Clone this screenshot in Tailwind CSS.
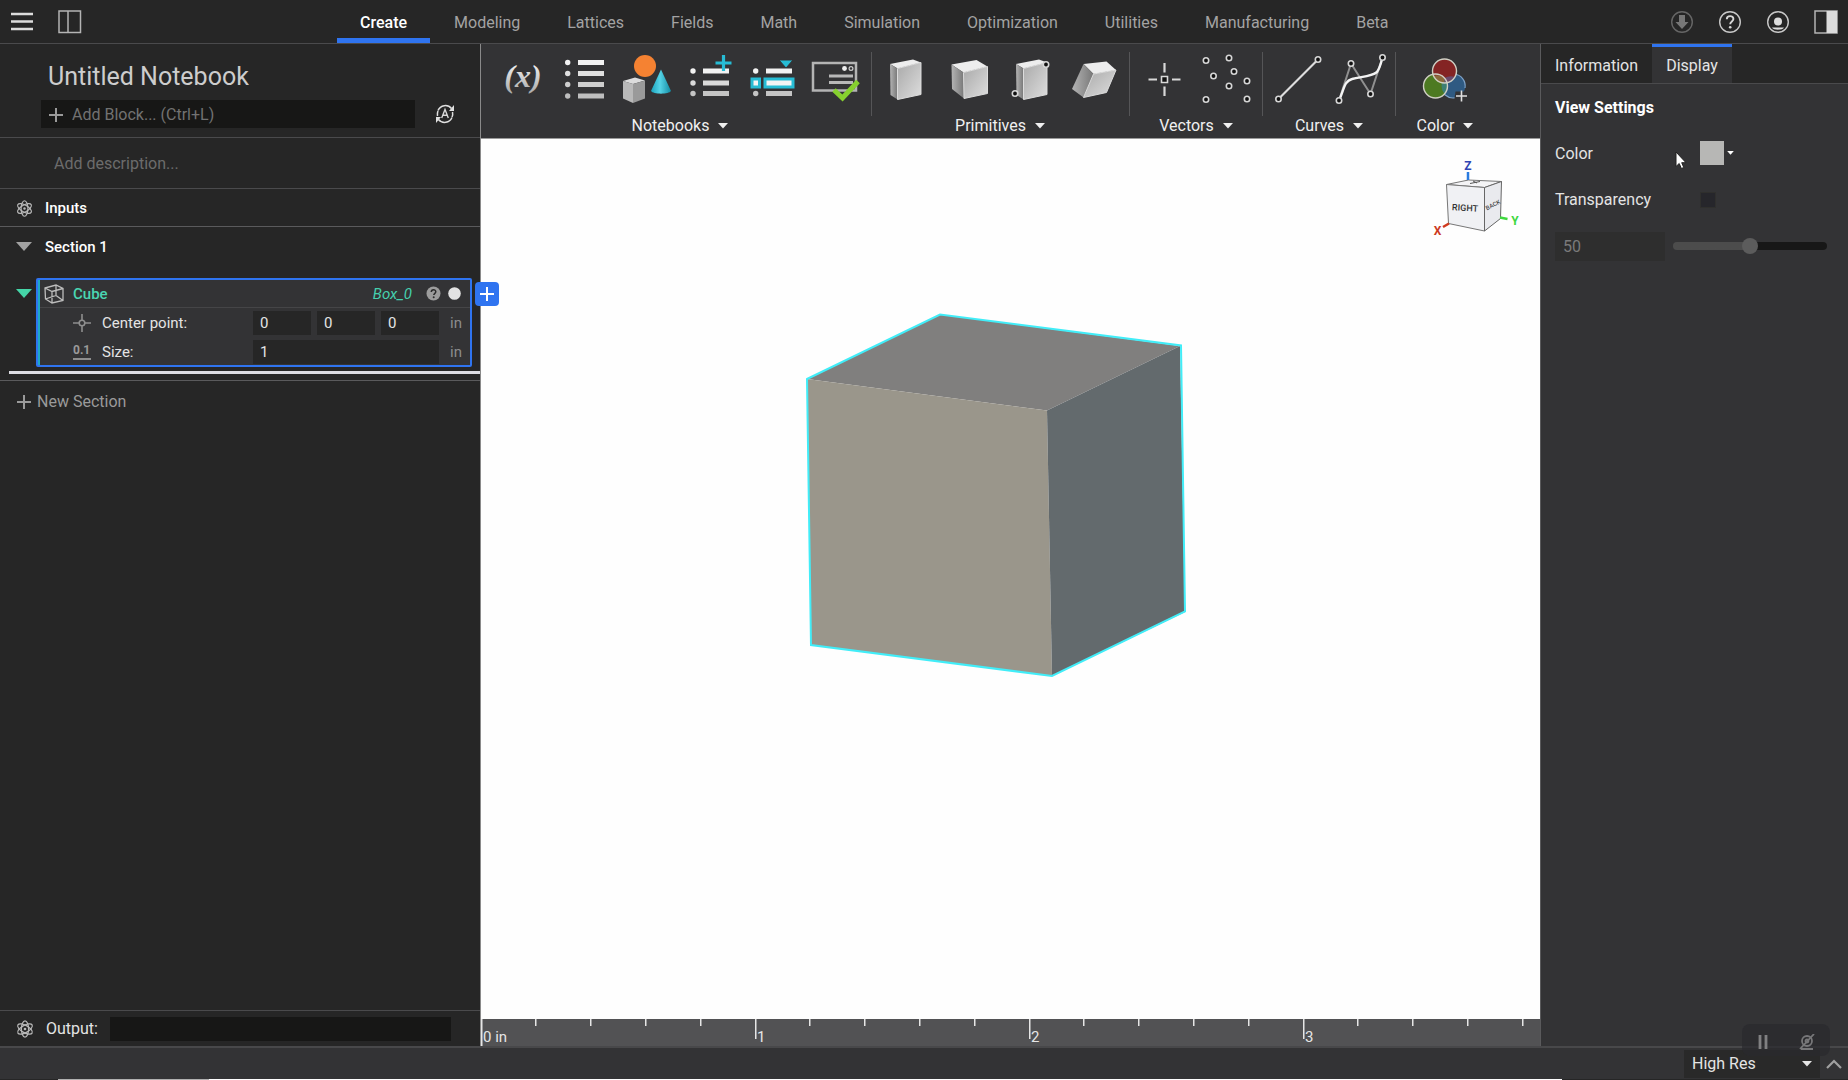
<!DOCTYPE html>
<html lang="en">
<head>
  <meta charset="UTF-8" />
  <meta name="viewport" content="width=device-width, initial-scale=1.0"/>
  <title>Untitled Notebook</title>
  <script src="https://cdn.jsdelivr.net/npm/@tailwindcss/browser@4"></script>
</head>
<body class="h-screen flex flex-col overflow-hidden bg-[#333335] text-[#e4e4e4] text-[16px] leading-5 font-['Roboto',sans-serif]">

  <!-- Shared icons -->
  <svg class="absolute w-0 h-0">
    <defs>
      <linearGradient id="metal" x1="0" y1="0" x2="0" y2="1"><stop offset="0" stop-color="#fff"/><stop offset="1" stop-color="#a8a8a8"/></linearGradient>
      <linearGradient id="face" x1="0" y1="0" x2="1" y2="1"><stop offset="0" stop-color="#a9a9a9"/><stop offset="1" stop-color="#dedede"/></linearGradient>
      <linearGradient id="side" x1="0" y1="0" x2="1" y2="0"><stop offset="0" stop-color="#b4b4b4"/><stop offset="1" stop-color="#777"/></linearGradient>
      <linearGradient id="cone" x1="0" y1="0" x2="1" y2="0"><stop offset="0" stop-color="#1aa3bd"/><stop offset=".45" stop-color="#55d3e6"/><stop offset="1" stop-color="#128ba3"/></linearGradient>
    </defs>
    <symbol id="atom" viewBox="0 0 18 18">
      <g fill="none" stroke="#b9b9b9" stroke-width="1.2">
        <ellipse cx="9" cy="9" rx="3.6" ry="8.2"/>
        <ellipse cx="9" cy="9" rx="3.6" ry="8.2" transform="rotate(60 9 9)"/>
        <ellipse cx="9" cy="9" rx="3.6" ry="8.2" transform="rotate(120 9 9)"/>
      </g>
      <circle cx="9" cy="9" r="1.3" fill="#b9b9b9"/>
    </symbol>
    <symbol id="caret" viewBox="0 0 10 6"><path d="M0 0h10L5 5.500z" fill="currentColor"/></symbol>
    <symbol id="plus" viewBox="0 0 16 16"><path d="M8 1v14M1 8h14" stroke="currentColor" stroke-width="2" fill="none"/></symbol>
    <symbol id="dot" viewBox="0 0 8 8"><circle cx="4" cy="4" r="2.700" fill="#111" stroke="#d6d6d6" stroke-width="1.600"/></symbol>
  </svg>

  <!-- Top bar -->
  <header class="h-11 shrink-0 flex items-stretch bg-[#262626] border-b border-[#4a4a4c]">
    <div class="w-[337px] flex items-center gap-6 pl-2.5">
      <button aria-label="Menu"><svg class="block w-6 h-6" viewBox="0 0 24 24"><path d="M1 4h22M1 11.500h22M1 19h22" stroke="#dcdcdc" stroke-width="2.500"/></svg></button>
      <button aria-label="Toggle left panel"><svg class="block w-6 h-6" viewBox="0 0 24 24"><path d="M1 1h21.500v21.500H1zM10 1v21.500" stroke="#b4b4b4" stroke-width="1.500" fill="none"/></svg></button>
    </div>
    <nav class="flex gap-px text-[#a3a3a3]">
      <a href="#create" class="px-[23px] pt-[13px] border-b-5 border-[#2f74f0] text-white font-medium">Create</a>
      <a href="#modeling" class="px-[23px] pt-[13px]">Modeling</a>
      <a href="#lattices" class="px-[23px] pt-[13px]">Lattices</a>
      <a href="#fields" class="px-[23px] pt-[13px]">Fields</a>
      <a href="#math" class="px-[23px] pt-[13px]">Math</a>
      <a href="#simulation" class="px-[23px] pt-[13px]">Simulation</a>
      <a href="#optimization" class="px-[23px] pt-[13px]">Optimization</a>
      <a href="#utilities" class="px-[23px] pt-[13px]">Utilities</a>
      <a href="#manufacturing" class="px-[23px] pt-[13px]">Manufacturing</a>
      <a href="#beta" class="px-[23px] pt-[13px]">Beta</a>
    </nav>
    <div class="ml-auto pr-2.5 flex items-center gap-6">
      <button aria-label="Download"><svg class="block w-6 h-6" viewBox="0 0 24 24"><circle cx="12" cy="12" r="10.300" fill="none" stroke="#666" stroke-width="1.400"/><path d="M9 5h6v7h3.500L12 19l-6.500-7H9z" fill="#777"/></svg></button>
      <button aria-label="Help"><svg class="block w-6 h-6" viewBox="0 0 24 24"><circle cx="12" cy="12" r="10.300" fill="none" stroke="#c8c8c8" stroke-width="1.400"/><path d="M8.800 9.300c0-4.200 6.600-4.200 6.600-.2 0 2.400-3.200 2.600-3.200 5.200" fill="none" stroke="#d8d8d8" stroke-width="1.900"/><circle cx="12.200" cy="17.200" r="1.300" fill="#d8d8d8"/></svg></button>
      <button aria-label="Account"><svg class="block w-6 h-6" viewBox="0 0 24 24"><circle cx="12" cy="12" r="10.300" fill="none" stroke="#c8c8c8" stroke-width="1.400"/><circle cx="12" cy="11.500" r="4" fill="#dedede"/><path d="M6 17.500h12c-1.500 3-10.500 3-12 0z" fill="#dedede"/></svg></button>
      <button aria-label="Toggle right panel"><svg class="block w-6 h-6" viewBox="0 0 24 24"><path d="M1 1h22v22H1z" stroke="#b4b4b4" stroke-width="1.500" fill="none"/><path d="M12.500 1H23v22H12.500z" fill="#dcdcdc"/></svg></button>
    </div>
  </header>

  <div class="flex-1 min-h-0 flex">

    <!-- Notebook panel -->
    <aside class="w-[481px] shrink-0 flex flex-col bg-[#262626] border-r border-[#8a8a8a]">
      <div class="h-[94px] shrink-0 border-b border-[#4a4a4c] pt-4">
        <input aria-label="Notebook name" value="Untitled Notebook" class="block w-[400px] h-8 ml-12 text-[25px] text-[#cdcdcd] outline-none"/>
        <div class="flex items-center mt-2 pl-[41px]">
          <label class="w-[374px] h-7 flex items-center gap-2 pl-[7px] pt-0.5 bg-[#171716] text-[#9a9a9a]">
            <svg class="w-4 h-4"><use href="#plus"/></svg>
            <input aria-label="Add block" placeholder="Add Block... (Ctrl+L)" class="flex-1 outline-none placeholder:text-[#727272]"/>
          </label>
          <button aria-label="Auto update" class="ml-5">
            <svg class="block w-5 h-5" viewBox="0 0 20 20"><path d="M3 6.500A8 8 0 0 1 16.500 4.500M17.500 8A8 8 0 0 1 17 13M17 13.500A8 8 0 0 1 3.500 15.500M2.500 12A8 8 0 0 1 3 7" stroke="#e0e0e0" stroke-width="1.500" fill="none"/><path d="M19 1v6h-5zM1 19v-6h5z" fill="#e0e0e0"/><path d="M6.700 14L10 5.500l3.300 8.500M8 11.300h4" stroke="#d8d8d8" stroke-width="1.400" fill="none"/></svg>
          </button>
        </div>
      </div>
      <div class="h-[51px] shrink-0 flex items-center pl-[54px] pt-0.5 border-b border-[#4a4a4c]">
        <input aria-label="Description" placeholder="Add description..." class="w-[380px] outline-none placeholder:text-[#6c6c6c]"/>
      </div>
      <div class="h-[38px] shrink-0 flex items-center gap-3 pl-4 pt-px border-b border-[#5a5a5c]">
        <svg class="w-[17px] h-[17px]"><use href="#atom"/></svg>
        <h2 class="text-[15px] font-medium text-white">Inputs</h2>
      </div>
      <div class="h-[51px] shrink-0 flex items-start gap-[13px] pl-4 pt-[10px]">
        <svg class="w-4 h-[9px] mt-[5px] text-[#a2a2a2]" viewBox="0 0 16 9"><path d="M0 0h16L8 9z" fill="currentColor"/></svg>
        <h2 class="text-[15px] font-medium text-white">Section 1</h2>
      </div>

      <!-- Cube block -->
      <div class="flex shrink-0 items-start pl-4 text-[15px]">
        <svg class="w-4 h-[9px] mt-[11px] mr-1 text-[#45d6a8]" viewBox="0 0 16 9"><path d="M0 0h16L8 9z" fill="currentColor"/></svg>
        <div class="relative w-[436px] h-[89px] border-2 border-[#2f74f0] rounded-xs bg-[#333335]">
          <div class="h-7 flex items-center pl-1.5 pr-[9px] border-b border-[#454547]">
            <svg class="w-5 h-5" viewBox="0 0 20 20" fill="none" stroke="#bdbdbd" stroke-width="1.300"><path d="M1 4L12 1l7 3.500v12L8 19l-6.500-4zM1 4l7 3.500 11-3M8 7.500V19M12 1v10.500M1.500 15L12 11.500l7 5"/></svg>
            <span class="ml-[9px] font-medium text-[#4ad6b2]">Cube</span>
            <span class="ml-auto italic text-[#45cfae]">Box_0</span>
            <svg class="w-[15px] h-[15px] ml-3.5" viewBox="0 0 15 15"><circle cx="7.500" cy="7.500" r="7" fill="#9c9c9c"/><path d="M5.300 6c0-3 4.500-3 4.500-.200 0 1.500-2 1.600-2 3.300" fill="none" stroke="#2c2c2c" stroke-width="1.500"/><circle cx="7.700" cy="11.300" r="1" fill="#2c2c2c"/></svg>
            <svg class="w-[13px] h-[13px] ml-[7px]" viewBox="0 0 13 13"><circle cx="6.500" cy="6.500" r="6.300" fill="#e2e2e2"/></svg>
          </div>
          <div class="h-7 flex items-center pl-[35px] pt-0.5">
            <svg class="w-[18px] h-[18px]" viewBox="0 0 18 18" fill="none" stroke="#8e8e8e" stroke-width="1.600"><path d="M9 0v6M9 12v6M0 9h6M12 9h6"/><circle cx="9" cy="9" r="2.800"/></svg>
            <span class="ml-[11px] w-[151px]">Center point:</span>
            <input aria-label="Center x" value="0" class="w-[58px] h-6 pl-[7px] bg-[#262626] outline-none"/>
            <input aria-label="Center y" value="0" class="w-[58px] h-6 pl-[7px] ml-1.5 bg-[#262626] outline-none"/>
            <input aria-label="Center z" value="0" class="w-[58px] h-6 pl-[7px] ml-1.5 bg-[#262626] outline-none"/>
            <span class="ml-[11px] text-[#8c8c8c]">in</span>
          </div>
          <div class="h-[29px] flex items-center pl-[35px] pt-0.5">
            <span class="w-[18px] text-[12px] leading-[15px] font-bold text-[#9a9a9a] border-b-2 border-[#8e8e8e]">0.1</span>
            <label for="size" class="ml-[11px] w-[151px]">Size:</label>
            <input id="size" value="1" class="w-[186px] h-6 pl-[7px] bg-[#262626] outline-none"/>
            <span class="ml-[11px] text-[#8c8c8c]">in</span>
          </div>
          <div class="absolute left-0 top-0 w-0.5 h-full bg-[#1fa9c4]"></div>
          <button aria-label="Add block after" class="absolute z-10 left-[437px] top-0.5 w-6 h-6 rounded bg-[#2f74f0] flex items-center justify-center text-white">
            <svg class="w-4 h-4"><use href="#plus"/></svg>
          </button>
        </div>
      </div>
      <div class="shrink-0 h-[3px] mt-1 ml-[9px] bg-[#dcdce2]"></div>
      <div class="shrink-0 h-[7px] border-b border-[#5a5a5c]"></div>
      <button class="flex items-center gap-[5px] pl-4 pt-[11px] text-[#9a9a9a]">
        <svg class="w-4 h-4"><use href="#plus"/></svg>New Section
      </button>

      <div class="mt-auto shrink-0 h-9 flex items-center pl-4 border-t border-[#4a4a4c]">
        <svg class="w-[18px] h-[18px]"><use href="#atom"/></svg>
        <label for="output" class="ml-3 w-16">Output:</label>
        <input id="output" class="w-[341px] h-6 bg-[#171716] outline-none"/>
      </div>
    </aside>

    <!-- Toolbar and viewport -->
    <main class="flex-1 min-w-0 flex flex-col">
      <div class="h-[95px] shrink-0 flex pt-2 pl-[10px] bg-[#333335] border-b border-[#9a9a9a] overflow-hidden">

        <section>
          <div class="flex">
            <button aria-label="Variable"><svg class="block w-[63px] h-16" viewBox="0 0 63 64"><text x="32" y="35" text-anchor="middle" font-family="Liberation Serif, serif" font-style="italic" font-weight="bold" font-size="32" fill="url(#metal)">(x)</text></svg></button>
            <button aria-label="List"><svg class="block w-[63px] h-16" viewBox="0 0 63 64">
              <g fill="#f2f2f2"><circle cx="13.700" cy="10.500" r="2.700"/><path d="M24 8h26v5H24z"/></g>
              <g fill="#e0e0e0"><circle cx="13.700" cy="21.500" r="2.700"/><path d="M24 19h26v5H24z"/></g>
              <g fill="#cecece"><circle cx="13.700" cy="32.500" r="2.700"/><path d="M24 30h26v5H24z"/></g>
              <g fill="#bebebe"><circle cx="13.700" cy="44" r="2.700"/><path d="M24 41.500h26v5H24z"/></g>
            </svg></button>
            <button aria-label="Shapes"><svg class="block w-[63px] h-16" viewBox="0 0 63 64">
              <circle cx="28" cy="14" r="11" fill="#f58232"/>
              <path d="M6 29l12-3.500 10 3L16 32z" fill="#dcdcdc"/><path d="M6 29l10 3v19L6 46.500z" fill="#b9b9b9"/><path d="M16 32l12-3.500v18L16 51z" fill="#9a9a9a"/>
              <path d="M44 17.500l10 21.500c-2 3.500-18 3.500-20 0z" fill="url(#cone)"/>
            </svg></button>
            <button aria-label="Add to list"><svg class="block w-[63px] h-16" viewBox="0 0 63 64">
              <g fill="#f2f2f2"><circle cx="13" cy="19" r="2.700"/><path d="M23 16.500h26v5H23z"/></g>
              <g fill="#dadada"><circle cx="13" cy="31" r="2.700"/><path d="M23 28.500h26v5H23z"/></g>
              <g fill="#c4c4c4"><circle cx="13" cy="41.500" r="2.700"/><path d="M23 39h26v5H23z"/></g>
              <path d="M43.500 3v16M35.500 11h16" stroke="#27bcd4" stroke-width="3.200"/>
            </svg></button>
            <button aria-label="Pick from list"><svg class="block w-[63px] h-16" viewBox="0 0 63 64">
              <g fill="#f2f2f2"><circle cx="12.700" cy="19" r="2.700"/><path d="M23 16.500h26v5H23z"/></g>
              <g fill="#c4c4c4"><circle cx="12.700" cy="41.500" r="2.700"/><path d="M23 39h26v5H23z"/></g>
              <path d="M9 27h7.500v8H9zM22 27h28v8H22z" fill="#f4f4f4" stroke="#27bcd4" stroke-width="3"/>
              <path d="M36 8h14l-7 8z" fill="#27bcd4" stroke="#333335" stroke-width="1"/>
            </svg></button>
            <button aria-label="Custom block"><svg class="block w-[63px] h-16" viewBox="0 0 63 64">
              <path d="M7 11h43v27.500H7z" fill="none" stroke="#b4b4b4" stroke-width="2.500"/>
              <circle cx="38.500" cy="16.500" r="2.400" fill="#eee"/><circle cx="45" cy="16.500" r="1.900" fill="none" stroke="#ccc" stroke-width="1.200"/>
              <path d="M23 24h24M23 30.500h24" stroke="#b8b8b8" stroke-width="3"/>
              <path d="M28 38l8.500 8L52 29.500" fill="none" stroke="#86d02f" stroke-width="5"/>
            </svg></button>
          </div>
          <button class="w-full flex items-center justify-center gap-[9px] text-[#f0f0f0]">Notebooks <svg class="w-2.5 h-1.5"><use href="#caret"/></svg></button>
        </section>
        <div class="w-px h-16 bg-[#555557] mx-[2px] shrink-0"></div>

        <section>
          <div class="flex">
            <button aria-label="Box"><svg class="block w-[63px] h-16" viewBox="0 0 63 64">
              <path d="M16 12l23-4.500 8 3-23.500 6z" fill="#ededed"/><path d="M16 12l7.500 4.500v31L16.500 43z" fill="url(#side)"/><path d="M23.500 16.500l23.500-6v32l-23.500 5z" fill="url(#face)" stroke="#dcdcdc" stroke-width="1"/>
            </svg></button>
            <button aria-label="Cube"><svg class="block w-[63px] h-16" viewBox="0 0 63 64">
              <path d="M14.500 12.500l25-4.500 11 6.500-24 6z" fill="#ededed"/><path d="M14.500 12.500l12 8 .5 26L15 37z" fill="url(#side)"/><path d="M26.500 20.500l24-6v27L27 46.500z" fill="url(#face)" stroke="#dcdcdc" stroke-width="1"/>
            </svg></button>
            <button aria-label="Box from corners"><svg class="block w-[63px] h-16" viewBox="0 0 63 64">
              <path d="M16 12l23-4.500 8 3-23.500 6z" fill="#ededed"/><path d="M16 12l7.500 4.500v31L16.500 43z" fill="url(#side)"/><path d="M23.500 16.500l23.500-6v32l-23.500 5z" fill="url(#face)" stroke="#dcdcdc" stroke-width="1"/>
              <use href="#dot" x="42" y="8.500" width="8" height="8"/><use href="#dot" x="11" y="37.500" width="8" height="8"/>
            </svg></button>
            <button aria-label="Parallelepiped"><svg class="block w-[63px] h-16" viewBox="0 0 63 64">
              <path d="M20.500 12l23-2.500 9.500 8.500-22.500 4z" fill="#ededed"/><path d="M20.500 12l10 10-10 23.500L9 37z" fill="url(#side)"/><path d="M30.500 22l22.500-4-9.500 22.500-23 5z" fill="url(#face)" stroke="#dcdcdc" stroke-width="1"/>
            </svg></button>
          </div>
          <button class="w-full flex items-center justify-center gap-[9px] text-[#f0f0f0]">Primitives <svg class="w-2.5 h-1.5"><use href="#caret"/></svg></button>
        </section>
        <div class="w-px h-16 bg-[#555557] mx-[3px] shrink-0"></div>

        <section>
          <div class="flex">
            <button aria-label="Point"><svg class="block w-[63px] h-16" viewBox="0 0 63 64">
              <path d="M31.500 11v9.500M31.500 34.500V44M15.500 27.500H24M39 27.500h8.500" stroke="#d8d8d8" stroke-width="2.200"/>
              <path d="M28.500 24.500h6v6h-6z" fill="#111" stroke="#d8d8d8" stroke-width="1.600"/>
            </svg></button>
            <button aria-label="Point list"><svg class="block w-[63px] h-16" viewBox="0 0 63 64">
              <use href="#dot" x="6" y="4.500" width="8" height="8"/><use href="#dot" x="29" y="2" width="8" height="8"/>
              <use href="#dot" x="34" y="15.500" width="8" height="8"/><use href="#dot" x="13.500" y="20" width="8" height="8"/>
              <use href="#dot" x="29" y="30" width="8" height="8"/><use href="#dot" x="6" y="43.500" width="8" height="8"/>
              <use href="#dot" x="47" y="25" width="8" height="8"/><use href="#dot" x="47" y="43" width="8" height="8"/>
            </svg></button>
          </div>
          <button class="w-full flex items-center justify-center gap-[9px] text-[#f0f0f0]">Vectors <svg class="w-2.5 h-1.5"><use href="#caret"/></svg></button>
        </section>
        <div class="w-px h-16 bg-[#555557] mx-[3px] shrink-0"></div>

        <section>
          <div class="flex">
            <button aria-label="Line"><svg class="block w-[63px] h-16" viewBox="0 0 63 64">
              <path d="M12.500 47L52 7.500" stroke="#dedede" stroke-width="2.200"/>
              <use href="#dot" x="8.500" y="43" width="8" height="8"/><use href="#dot" x="48" y="3.500" width="8" height="8"/>
            </svg></button>
            <button aria-label="Spline"><svg class="block w-[63px] h-16" viewBox="0 0 63 64">
              <path d="M10 48.500L22 11.500 41.500 42l12-36.500" fill="none" stroke="#909090" stroke-width="2"/>
              <path d="M10 48.500C15 38 15 29 23 27c9-2.500 19-2 25-7 3-4 4-9 5.500-14.500" fill="none" stroke="#f4f4f4" stroke-width="2.400"/>
              <use href="#dot" x="6" y="44.500" width="8" height="8"/><use href="#dot" x="18" y="7.500" width="8" height="8"/>
              <use href="#dot" x="37.500" y="38" width="8" height="8"/><use href="#dot" x="49.500" y="1.500" width="8" height="8"/>
            </svg></button>
          </div>
          <button class="w-full flex items-center justify-center gap-[9px] text-[#f0f0f0]">Curves <svg class="w-2.5 h-1.5"><use href="#caret"/></svg></button>
        </section>
        <div class="w-px h-16 bg-[#555557] mx-[3px] shrink-0"></div>

        <section>
          <button aria-label="Color" class="block"><svg class="block w-[92px] h-16" viewBox="0 0 92 64">
            <path d="M65 39.500a12 12 0 1 0-9.500 6.400l1-6.400z" fill="#2f5a82"/>
            <path d="M66 36a12 12 0 1 0-10.500 9.900" fill="none" stroke="#7fa3c8" stroke-width="1.200"/>
            <circle cx="36.500" cy="34" r="12" fill="#4d7a22"/>
            <circle cx="45.500" cy="19" r="12" fill="#842424"/>
            <path d="M45.500 26.100a12 12 0 0 1 0 15.800 12 12 0 0 1 0-15.800z" fill="#3c7f74"/>
            <path d="M34.500 23.800a12 12 0 0 1 11 2.300 12 12 0 0 1 0 4.900 12 12 0 0 1-11-7.200z" fill="#8c6a3c"/>
            <path d="M45.500 31a12 12 0 0 0 10.500-6 12 12 0 0 0-10.500 1.100z" fill="#6b4a6c"/>
            <g fill="none" stroke="#d0d0c4" stroke-width="1.400"><circle cx="36.500" cy="34" r="12"/><circle cx="45.500" cy="19" r="12"/></g>
            <path d="M62.500 38.500v11M57 44h11" stroke="#e0e0e0" stroke-width="1.600"/>
          </svg></button>
          <button class="w-full flex items-center justify-center gap-[9px] text-[#f0f0f0]">Color <svg class="w-2.5 h-1.5"><use href="#caret"/></svg></button>
        </section>
      </div>

      <div class="flex-1 min-h-0 relative bg-[#fefefe]">
        <svg class="block w-full h-full" viewBox="481 139 1059 880">
          <path d="M807 379L940 314.500l240 31.500L1047 410.500z" fill="#807f7e"/>
          <path d="M807 379l240 31.500L1052 676 811 645z" fill="#9a968b"/>
          <path d="M1047 410.500L1180 346l5 266-133 64z" fill="#636a6d"/>
          <path d="M807 379L940 314.500l241 31 4 266-133 64.500L811 645z" fill="none" stroke="#41edf8" stroke-width="2"/>
        </svg>
        <!-- View orientation cube -->
        <svg class="absolute top-4 right-[18px] w-[92px] h-[86px]" viewBox="1430 155 92 86" font-family="Roboto, sans-serif">
          <path d="M1446.500 184.500l22-4.500 33 1.500-17 6z" fill="#f4f4f6" stroke="#777" stroke-width="1"/>
          <path d="M1446.500 184.500l38 3v43.500l-36-7.500z" fill="#f0f1f4" stroke="#777" stroke-width="1"/>
          <path d="M1484.500 187.500l17-6-1 37-16 12.500z" fill="#e9eaee" stroke="#666" stroke-width="1"/>
          <path d="M1470 183.500l10-2M1473 181l4 2" stroke="#555" stroke-width="1"/>
          <text x="1465" y="211" text-anchor="middle" font-size="9" font-weight="500" fill="#333" transform="rotate(3 1465 208)">RIGHT</text>
          <text x="1493" y="207" text-anchor="middle" font-size="6" font-weight="500" fill="#444" transform="rotate(-28 1493 205)">BACK</text>
          <path d="M1468 172v8" stroke="#2a7be0" stroke-width="2.500"/>
          <path d="M1449 223.500l-6 3.500" stroke="#d03a1e" stroke-width="2.500"/>
          <path d="M1500 217.500l7.500 1.500" stroke="#3fd83f" stroke-width="2.500"/>
          <text x="1468" y="170" text-anchor="middle" font-size="12" font-weight="700" fill="#2f45b4">Z</text>
          <text x="1437.500" y="235" text-anchor="middle" font-size="12" font-weight="700" fill="#cc3a22">X</text>
          <text x="1515" y="225" text-anchor="middle" font-size="12" font-weight="700" fill="#3fd83f">Y</text>
        </svg>
      </div>

      <!-- Ruler -->
      <svg id="ruler" class="block w-full h-[27px] shrink-0 bg-[#525254] text-[15px]"></svg>
    </main>

    <!-- Properties panel -->
    <aside class="relative w-[308px] shrink-0 border-l border-[#5a5a5c] bg-[#333335]">
      <div class="h-10 flex bg-[#262626] border-b border-[#4a4a4c]">
        <button class="w-[111px] pt-[5px]">Information</button>
        <button class="w-20 border-t-3 border-[#2f74f0] bg-[#333335] pt-0.5">Display</button>
      </div>
      <div class="pl-[14px]">
        <h3 class="mt-[14px] font-bold text-white">View Settings</h3>
        <div class="flex items-center h-[46px] mt-3">
          <span class="w-[145px] pt-0.5">Color</span>
          <button aria-label="Pick color" class="flex items-center gap-[3px] text-white">
            <span class="w-6 h-6 bg-[#b7b7b5]"></span>
            <svg class="w-[7px] h-1"><use href="#caret"/></svg>
          </button>
        </div>
        <div class="flex items-center h-[47px]">
          <label for="transparency" class="w-[145px]">Transparency</label>
          <input id="transparency" type="checkbox" class="appearance-none w-4 h-4 bg-[#26262b] border border-[#2f2f2d]"/>
        </div>
        <div class="flex items-center h-[46px] gap-2">
          <input aria-label="Transparency value" value="50" disabled class="w-[110px] h-[29px] pl-2 bg-[#2e2e2e] text-[#7a7a7a]"/>
          <input aria-label="Transparency amount" type="range" value="50" disabled class="appearance-none w-[154px] h-2 rounded-full bg-linear-to-r from-[#4c4c4c] from-50% to-[#171717] to-50% [&::-webkit-slider-thumb]:appearance-none [&::-webkit-slider-thumb]:w-4 [&::-webkit-slider-thumb]:h-4 [&::-webkit-slider-thumb]:rounded-full [&::-webkit-slider-thumb]:bg-[#5c5c5c]"/>
        </div>
      </div>
      <!-- Mouse pointer -->
      <svg class="absolute left-[134px] top-[107px] w-3 h-[19px]" viewBox="0 0 12 19"><path d="M1 1v14.500l3.200-3 2.200 5 2.400-1-2.100-4.800H11z" fill="#fff" stroke="#222" stroke-width="1"/></svg>
    </aside>
  </div>

  <!-- Status bar -->
  <footer class="relative h-[34px] shrink-0 flex flex-col bg-[#333335] border-t-2 border-[#48484a]">
    <div class="flex-1 flex items-center justify-end gap-1.5 pr-1.5">
      <div class="relative">
        <select aria-label="Resolution" class="appearance-none block w-[136px] h-7 pl-2 bg-[#292929] text-[#e4e4e4]"><option>High Res</option></select>
        <svg class="absolute right-2 top-[11px] w-2.5 h-1.5"><use href="#caret"/></svg>
      </div>
      <button aria-label="Expand"><svg class="block w-4 h-2.5" viewBox="0 0 16 10"><path d="M1 9l7-7 7 7" fill="none" stroke="#a0a0a0" stroke-width="2.200"/></svg></button>
    </div>
    <div class="h-px shrink-0 flex">
      <div class="w-[58px] bg-[#262626]"></div>
      <div class="w-[151px] bg-[#b0b0b0]"></div>
      <div class="flex-1 bg-white"></div>
      <div class="w-[286px] bg-[#262626]"></div>
    </div>
    <!-- Recorder overlay -->
    <div class="absolute right-[18px] -top-6 w-[88px] h-8 rounded-lg bg-[#2a2a2d]/70 flex items-center justify-around pt-1">
      <button aria-label="Pause"><svg class="block w-3 h-3.5" viewBox="0 0 12 14"><path d="M3 0v14M9 0v14" stroke="#808082" stroke-width="2.800"/></svg></button>
      <button aria-label="Webcam off"><svg class="block w-4 h-4" viewBox="0 0 16 16" fill="none" stroke="#777779" stroke-width="1.800"><circle cx="8" cy="7" r="5"/><circle cx="8" cy="7" r="1.500"/><path d="M2 15h12M1 15L15 0"/></svg></button>
    </div>
  </footer>

  <script>
    // One tick per fifth of an inch, with a number on every whole inch
    const ruler = document.getElementById('ruler');
    const step = 54.8;

    function drawRuler() {
      const width = ruler.getBoundingClientRect().width;
      let marks = '';
      for (let i = 0; i * step < width; i++) {
        const x = Math.floor(i * step);
        const major = i % 5 === 0;
        marks += `<rect x="${x}" y="0" width="1.5" height="${major ? (i ? 20 : 27) : 7}" fill="#e6e6e6"/>`;
        if (major) marks += `<text x="${x + 2}" y="23" fill="#e6e6e6">${i === 0 ? '0 in' : i / 5}</text>`;
      }
      ruler.innerHTML = marks;
    }

    // Redraw whenever the viewport gets wider or narrower
    new ResizeObserver(drawRuler).observe(ruler);
  </script>

</body>
</html>
